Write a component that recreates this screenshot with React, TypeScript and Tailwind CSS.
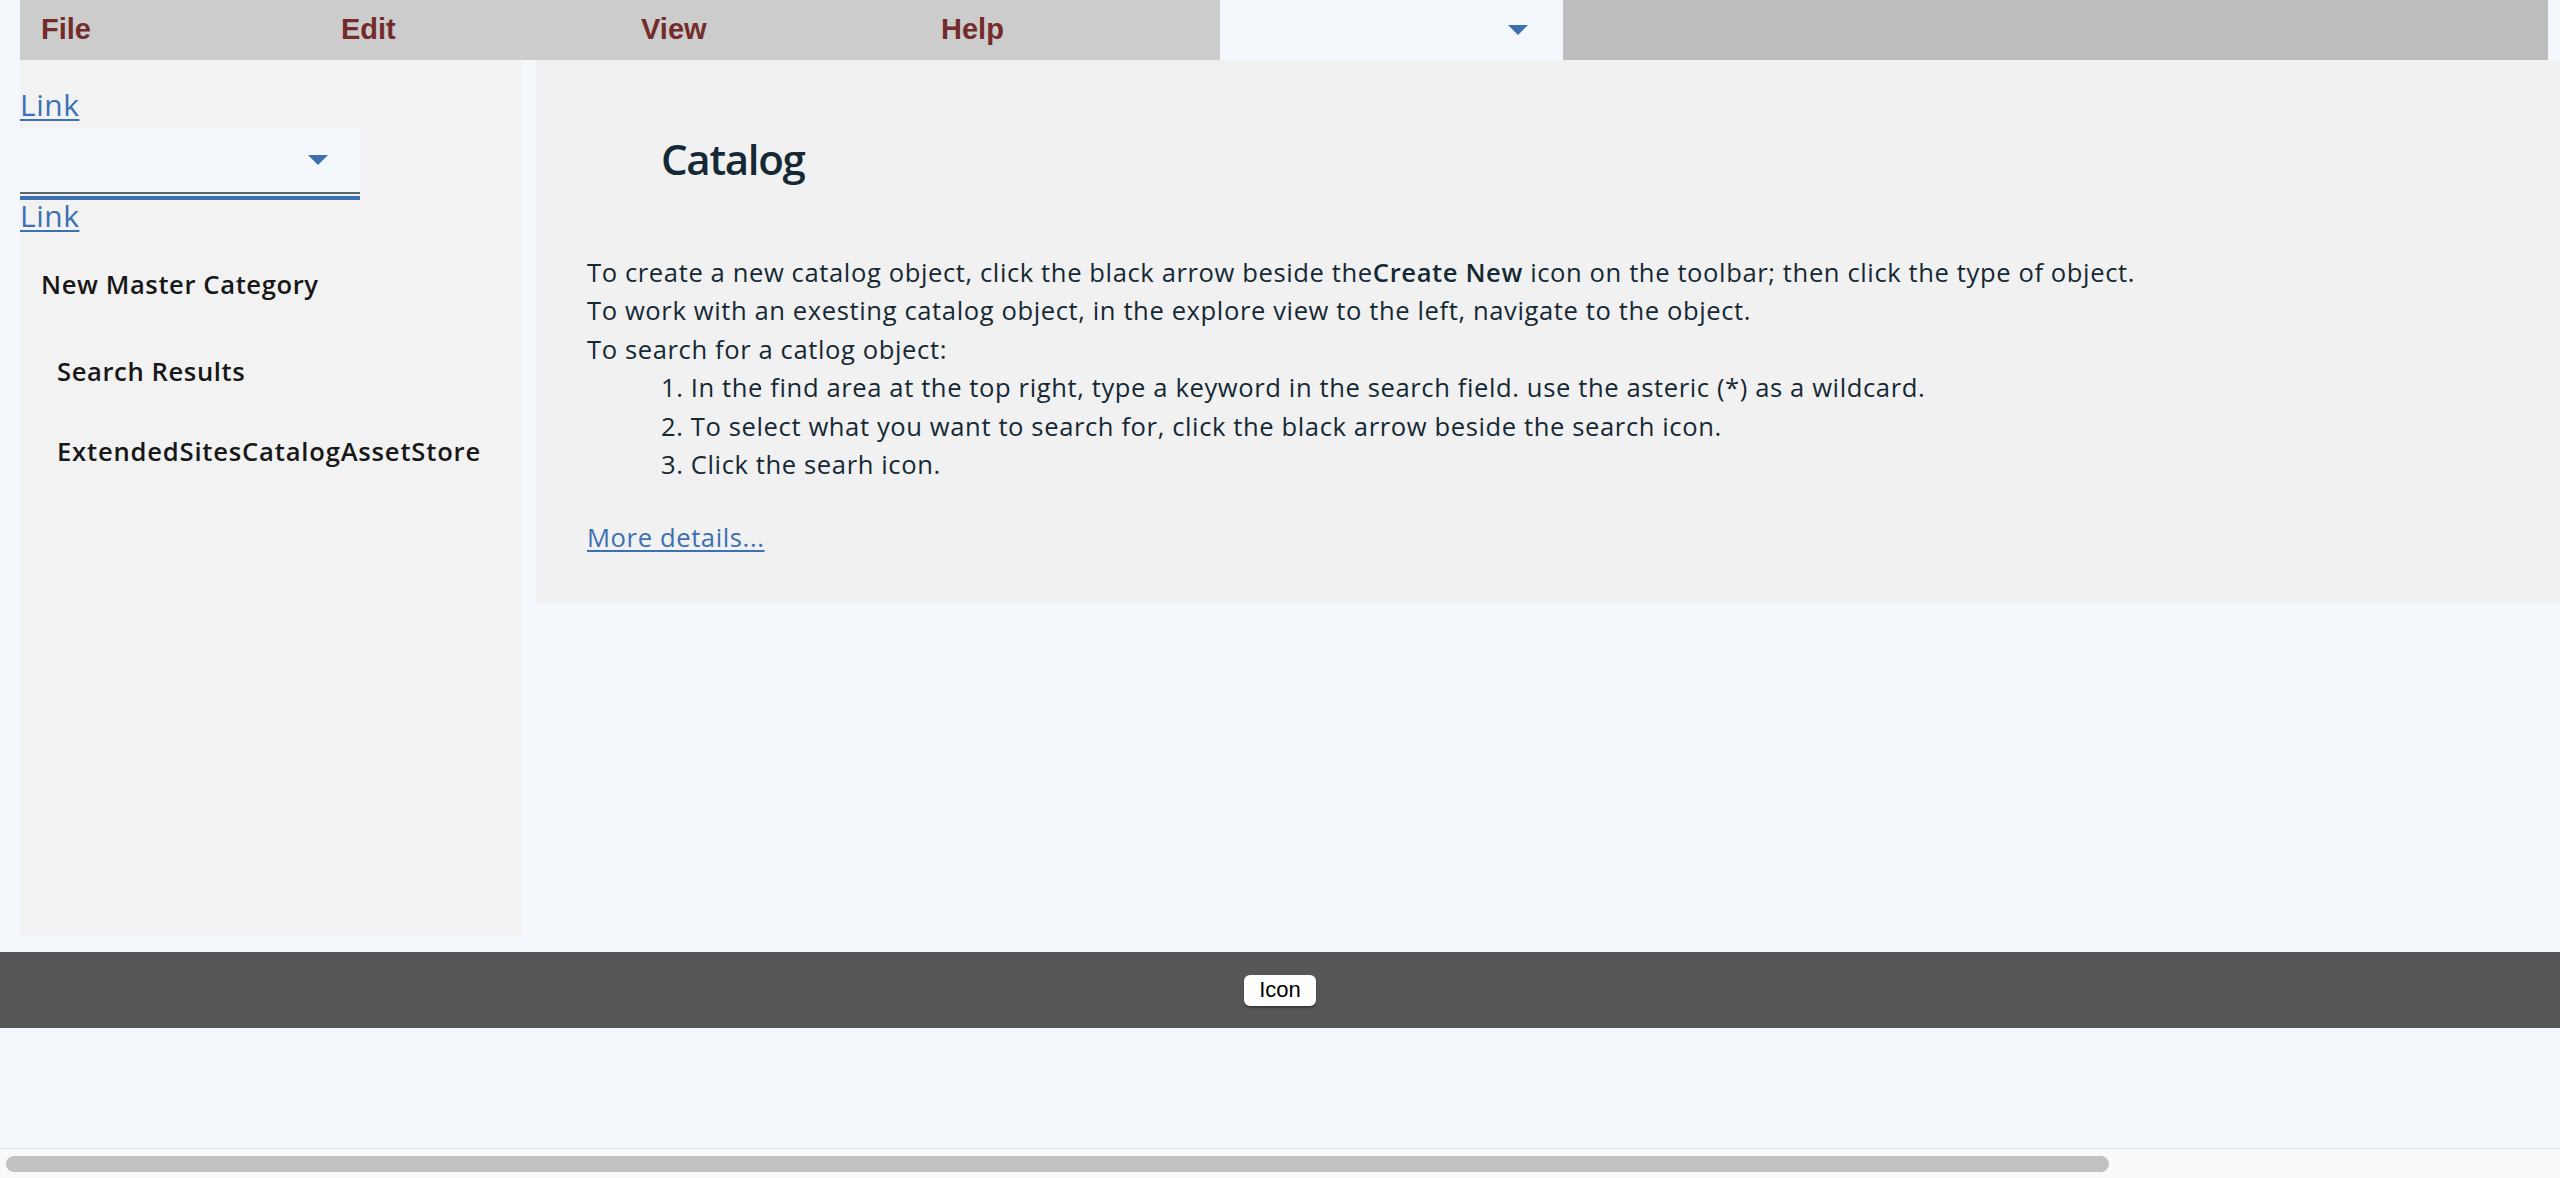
import React from "react";

const menuItems = ["File", "Edit", "View", "Help"];

const steps = [
  "In the find area at the top right, type a keyword in the search field. use the asteric (*) as a wildcard.",
  "To select what you want to search for, click the black arrow beside the search icon.",
  "Click the searh icon.",
];

function Caret({ className }: { className?: string }) {
  return (
    <svg className={className} width="20" height="10" viewBox="0 0 20 10" aria-hidden="true">
      <path d="M0 0h20L10 10z" fill="#3d70b2" />
    </svg>
  );
}

function MenuBar() {
  return (
    <div className="flex h-[60px] ml-[20px] mr-[12px] shrink-0">
      {menuItems.map((item) => (
        <div
          key={item}
          className="w-[300px] bg-[#cccccc] flex items-center pl-[21px] text-[29px] font-bold text-[#742b2b] font-['Liberation_Sans',Arial,sans-serif]"
        >
          {item}
        </div>
      ))}
      <div className="w-[343px] bg-[#f4f7fb] flex items-center justify-end pr-[35px]">
        <Caret />
      </div>
      <div className="flex-1 bg-[#bebebe]" />
    </div>
  );
}

function Sidebar() {
  return (
    <aside className="w-[502px] h-[876px] shrink-0 bg-[#f2f2f2] flex flex-col pt-[29px]">
      <a href="#" className="text-[30px] leading-[32px] tracking-[0.5px] text-[#3d70b2] underline decoration-2 underline-offset-[3px] self-start">
        Link
      </a>
      <div className="mt-[7px] w-[340px]">
        <div className="h-[64px] bg-[#f4f7fb] flex items-center justify-end pr-[32px]">
          <Caret />
        </div>
        <div className="h-[2px] bg-[#5a6872]" />
        <div className="h-[4px] mt-[2px] bg-[#3d70b2]" />
      </div>
      <a href="#" className="text-[30px] leading-[32px] tracking-[0.5px] text-[#3d70b2] underline decoration-2 underline-offset-[3px] self-start">
        Link
      </a>
      <div className="mt-[29px] h-[48px] flex items-center pl-[21px] text-[25.6px] tracking-[0.6px] font-semibold text-[#171717]">
        New Master Category
      </div>
      <div className="mt-[39px] h-[48px] flex items-center pl-[37px] text-[25.6px] tracking-[0.6px] font-semibold text-[#171717]">
        Search Results
      </div>
      <div className="mt-[32px] h-[48px] flex items-center pl-[37px] text-[25.6px] tracking-[0.8px] font-semibold text-[#171717]">
        ExtendedSitesCatalogAssetStore
      </div>
    </aside>
  );
}

function CatalogPanel() {
  return (
    <main className="flex-1 h-[543px] bg-[#f1f1f1] pt-[71px] text-[#152935]">
      <h1 className="pl-[125px] text-[42px] leading-[56px] tracking-[-1.3px] font-semibold">Catalog</h1>
      <div className="mt-[67px] pl-[51px] text-[25.6px] leading-[38.4px] tracking-[0.6px]">
        <p>
          To create a new catalog object, click the black arrow beside the<span className="font-semibold">Create New</span> icon on
          the toolbar; then click the type of object.
        </p>
        <p>To work with an exesting catalog object, in the explore view to the left, navigate to the object.</p>
        <p>To search for a catlog object:</p>
        <ol className="list-decimal list-inside pl-[74px]">
          {steps.map((s) => (
            <li key={s}>{s}</li>
          ))}
        </ol>
        <a href="#" className="inline-block mt-[35px] text-[#3d70b2] underline underline-offset-[3px]">
          More details...
        </a>
      </div>
    </main>
  );
}

export default function App() {
  return (
    <div className="h-screen w-full overflow-hidden bg-[#f4f7fb] flex flex-col font-['Open_Sans',sans-serif]">
      <MenuBar />
      <div className="flex pl-[20px] gap-[14px]">
        <Sidebar />
        <CatalogPanel />
      </div>
      <footer className="mt-[16px] h-[76px] shrink-0 bg-[#565656] flex items-center justify-center">
        <button className="w-[72px] h-[31px] bg-white rounded-[6px] shadow-[0_2px_2px_rgba(0,0,0,0.35)] text-[22px] leading-none text-black font-['Liberation_Sans',Arial,sans-serif]">
          Icon
        </button>
      </footer>
      <div className="flex-1" />
      <div className="h-[30px] shrink-0 border-t border-[#e6e6e8] bg-[#f9f9f9] pt-[7px] pl-[6px]">
        <div className="w-[2103px] h-[16px] rounded-full bg-[#c1c1c1]" />
      </div>
    </div>
  );
}
